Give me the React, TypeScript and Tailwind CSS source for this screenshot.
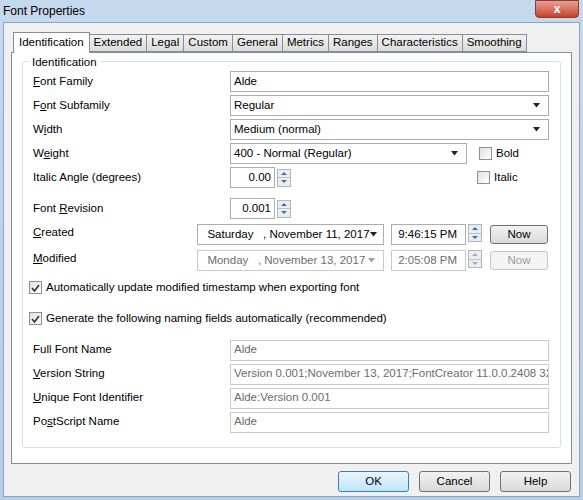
const Arrow = ({ dim }: { dim?: boolean }) => (
  <svg width="8" height="5" viewBox="0 0 8 5" className="ml-auto mr-1 shrink-0"><path d="M0 0h7L3.5 4.5z" fill={dim ? "#a0a0a0" : "#222"} /></svg>
);

const Spin = ({ dim }: { dim?: boolean }) => (
  <div className="flex flex-col w-[14px] h-[18px] ml-[2px] border border-[#b5b5b5] bg-[#e8eef6]">
    <div className="flex-1 flex items-center justify-center border-b border-[#c0c0c0]">
      <svg width="6" height="3"><path d="M0 3h6L3 0z" fill={dim ? "#aaa" : "#4a6fa5"} /></svg>
    </div>
    <div className="flex-1 flex items-center justify-center">
      <svg width="6" height="3"><path d="M0 0h6L3 3z" fill={dim ? "#aaa" : "#4a6fa5"} /></svg>
    </div>
  </div>
);

const Box = ({ w, text, sel, dim, right }: { w: string; text: string; sel?: boolean; dim?: boolean; right?: boolean }) => (
  <div className={`${w} h-[21px] border border-[#abadb3] bg-white flex items-center px-[3px] overflow-hidden ${dim ? "text-[#6d6d6d] border-[#c9c9c9]" : ""} ${right ? "justify-end" : ""}`}>
    <span className="whitespace-pre">{text}</span>
    {sel && <Arrow dim={dim} />}
  </div>
);

const Label = ({ children, w = "w-[197px]" }: { children: React.ReactNode; w?: string }) => (
  <div className={`${w} shrink-0`}>{children}</div>
);

const Check = ({ on, label }: { on?: boolean; label: string }) => (
  <div className="flex items-center gap-[4px]">
    <div className="w-[13px] h-[13px] border border-[#8f8f8f] bg-gradient-to-br from-[#e0e0e0] to-white flex items-center justify-center">
      {on && <svg width="9" height="8"><path d="M1 4l2.5 3L8 1" stroke="#333" strokeWidth="1.6" fill="none" /></svg>}
    </div>
    <span>{label}</span>
  </div>
);

const Btn = ({ t, dim }: { t: string; dim?: boolean }) => (
  <div className={`w-[58px] h-[19px] rounded-[3px] border flex items-center justify-center ${dim ? "border-[#c5c5c5] text-[#9a9a9a] bg-[#f4f4f4]" : "border-[#707070] bg-gradient-to-b from-[#f2f2f2] to-[#d9d9d9]"}`}>{t}</div>
);

const Row = ({ children, mt = "mt-[3px]" }: { children: React.ReactNode; mt?: string }) => (
  <div className={`flex items-center ${mt}`}>{children}</div>
);

export default function App() {
  const tabs = ["Extended", "Legal", "Custom", "General", "Metrics", "Ranges", "Characteristics", "Smoothing"];
  return (
    <div className="w-[583px] h-[500px] bg-gradient-to-b from-[#c4d8ee] to-[#b7cde6] text-[11.5px] text-black overflow-hidden" style={{ fontFamily: '"Liberation Sans", Arial, sans-serif' }}>
      <div className="h-[22px] flex items-center pl-[3px] relative">
        <span className="text-[12px]">Font Properties</span>
        <div className="absolute right-[4px] top-0 w-[44px] h-[18px] rounded-b-[4px] bg-gradient-to-b from-[#e8a193] to-[#c4402a] border border-[#8a3b2e] flex items-center justify-center text-white font-bold text-[12px]">x</div>
      </div>
      <div className="mx-[3px] h-[475px] bg-[#f0f0f0] border border-[#8ea3be] pt-[8px] px-[7px]">
        <div className="flex items-end h-[21px] pl-[2px]">
          <div className="h-[21px] px-[5px] border border-b-0 border-[#898c95] bg-white flex items-center -mb-px relative z-10">Identification</div>
          {tabs.map((t) => (
            <div key={t} className="h-[18px] px-[4px] border border-l-0 border-[#898c95] bg-gradient-to-b from-[#f2f2f2] to-[#dcdcdc] flex items-center">{t}</div>
          ))}
        </div>
        <div className="h-[412px] border border-[#898c95] bg-white px-[10px] pt-[8px]">
          <div className="h-[387px] border border-[#d5dfe5] rounded-[3px] relative px-[10px] pt-[6px]">
            <span className="absolute -top-[8px] left-[6px] bg-white px-[3px]">Identification</span>
            <Row><Label><u>F</u>ont Family</Label><Box w="w-[319px]" text="Alde" /></Row>
            <Row><Label>F<u>o</u>nt Subfamily</Label><Box w="w-[319px]" text="Regular" sel /></Row>
            <Row><Label>W<u>i</u>dth</Label><Box w="w-[319px]" text="Medium (normal)" sel /></Row>
            <Row><Label>W<u>e</u>ight</Label><Box w="w-[237px]" text="400 - Normal (Regular)" sel /><div className="ml-[12px]"><Check label="Bold" /></div></Row>
            <Row><Label>Italic Angle (degrees)</Label><Box w="w-[45px]" text="0.00" right /><Spin /><div className="ml-[186px]"><Check label="Italic" /></div></Row>
            <Row mt="mt-[10px]"><Label>Font <u>R</u>evision</Label><Box w="w-[45px]" text="0.001" right /><Spin /></Row>
            <Row mt="mt-[5px]"><Label w="w-[164px]"><span className="relative -top-[2px]"><u>C</u>reated</span></Label><Box w="w-[187px]" text="  Saturday   , November 11, 2017" sel /><div className="ml-[7px] flex"><Box w="w-[75px]" text=" 9:46:15 PM" /><Spin /></div><div className="ml-[8px]"><Btn t="Now" /></div></Row>
            <Row mt="mt-[5px]"><Label w="w-[164px]"><span className="relative -top-[2px]"><u>M</u>odified</span></Label><Box w="w-[187px]" text="  Monday   , November 13, 2017" sel dim /><div className="ml-[7px] flex"><Box w="w-[75px]" text=" 2:05:08 PM" dim /><Spin dim /></div><div className="ml-[8px]"><Btn t="Now" dim /></div></Row>
            <div className="mt-[8px] -ml-[4px]"><Check on label="Automatically update modified timestamp when exporting font" /></div>
            <div className="mt-[14px] -ml-[4px]"><Check on label="Generate the following naming fields automatically (recommended)" /></div>
            <Row mt="mt-[12px]"><Label>Full Font Name</Label><Box w="w-[319px]" text="Alde" dim /></Row>
            <Row><Label><u>V</u>ersion String</Label><Box w="w-[319px]" text="Version 0.001;November 13, 2017;FontCreator 11.0.0.2408 32-bit" dim /></Row>
            <Row><Label><u>U</u>nique Font Identifier</Label><Box w="w-[319px]" text="Alde:Version 0.001" dim /></Row>
            <Row><Label>Po<u>s</u>tScript Name</Label><Box w="w-[319px]" text="Alde" dim /></Row>
          </div>
        </div>
        <div className="flex justify-end gap-[10px] mt-[7px] pr-[1px]">
          <div className="w-[71px] h-[21px] rounded-[3px] border border-[#3c7fb1] bg-gradient-to-b from-[#eaf6fd] to-[#bee6fd] flex items-center justify-center">OK</div>
          <div className="w-[71px] h-[21px] rounded-[3px] border border-[#707070] bg-gradient-to-b from-[#f2f2f2] to-[#d9d9d9] flex items-center justify-center">Cancel</div>
          <div className="w-[71px] h-[21px] rounded-[3px] border border-[#707070] bg-gradient-to-b from-[#f2f2f2] to-[#d9d9d9] flex items-center justify-center">Help</div>
        </div>
      </div>
    </div>
  );
}
